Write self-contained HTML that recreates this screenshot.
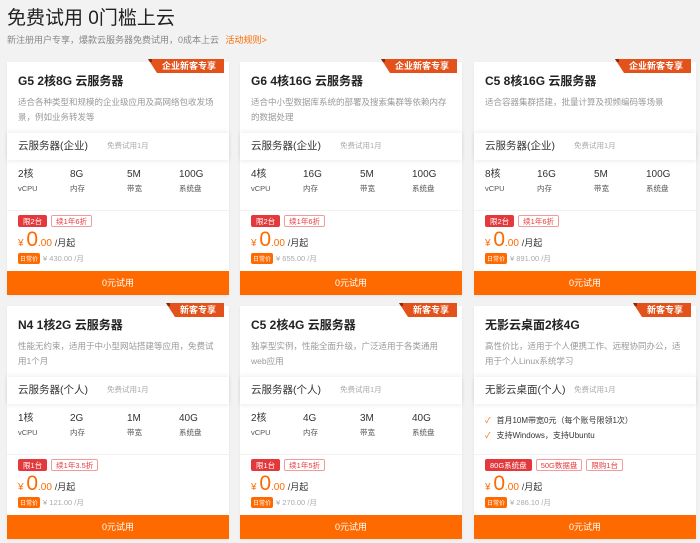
<!DOCTYPE html><html><head><meta charset="utf-8"><style>
*{margin:0;padding:0;box-sizing:border-box}
body{width:700px;height:543px;background:#f2f2f2;font-family:"Liberation Sans","Noto Sans CJK SC",sans-serif;color:#333;position:relative;overflow:hidden}
h1{position:absolute;left:7px;top:3px;font-size:19px;font-weight:normal;color:#222}
.sub{position:absolute;left:7px;top:33px;font-size:9px;color:#888}
.sub span{color:#ff6a00;margin-left:4px}
.card{position:absolute;width:222px;height:233px;background:#fff;box-shadow:0 1px 3px rgba(0,0,0,.06)}
.badge{position:absolute;right:5px;top:-3px;height:14px;background:#e4521c;color:#fff;font-size:9px;font-weight:bold;line-height:14px;padding:0 8px 0 14px;clip-path:polygon(0 0,100% 0,100% 100%,9px 100%)}
.badge:before{content:"";position:absolute;left:0;top:0;width:4px;height:3px;background:#8a2a0c}
.t{position:absolute;left:11px;top:11px;font-size:12px;line-height:16px;font-weight:bold;color:#222}
.d{position:absolute;left:11px;top:33px;width:200px;font-size:8.5px;line-height:15px;color:#999}
.band{position:absolute;left:0;top:71px;width:222px;height:27px;background:#fff;box-shadow:0 -2px 4px rgba(0,0,0,.05),0 2px 4px rgba(0,0,0,.06)}
.band b{position:absolute;left:11px;top:6px;font-size:10.5px;line-height:14px;font-weight:normal;color:#333}
.band i{position:absolute;left:100px;top:8px;font-size:7.5px;line-height:10px;font-style:normal;color:#aaa}
.sp{position:absolute;top:106px;font-size:10px;line-height:13px;color:#333}
.sp small{display:block;font-size:7.5px;line-height:10px;color:#555;margin-top:3px}
.hr{position:absolute;left:0;top:148px;width:222px;border-top:1px solid #f2f2f2}
.tags{position:absolute;left:11px;top:153px;font-size:0}
.tag{display:inline-block;height:12px;line-height:11px;font-size:7.5px;padding:0 4px;border:1px solid #f29b9b;color:#e4393c;border-radius:2px;margin-right:4px}
.tag.r{background:#e4393c;color:#fff;border-color:#e4393c}
.pr{position:absolute;left:11px;top:166px;color:#ff6a00;font-size:10px;line-height:24px}
.pr em{font-style:normal;font-size:21px}
.pr span{color:#333;font-size:9px}
.dp{position:absolute;left:11px;top:191px;font-size:7.5px;color:#aaa}
.dp b{display:inline-block;background:#ff6a00;color:#fff;font-weight:normal;font-size:6px;padding:1px 2px;border-radius:2px;margin-right:3px}
.btn{position:absolute;left:0;bottom:0;width:222px;height:24px;background:#ff6a00;color:#fff;font-size:9px;text-align:center;line-height:24px}
.ck{position:absolute;left:11px;font-size:8px;color:#333}
.ck:before{content:"✓";color:#ff6a00;margin-right:6px}
</style></head><body>
<h1>免费试用 0门槛上云</h1>
<div class="sub">新注册用户专享，爆款云服务器免费试用，0成本上云 <span>活动规则&gt;</span></div>

<div class="card" style="left:7px;top:62px"><div class="badge">企业新客专享</div><div class="t">G5 2核8G 云服务器</div><div class="d">适合各种类型和规模的企业级应用及高网络包收发场景，例如业务转发等</div><div class="band"><b>云服务器(企业)</b><i>免费试用1月</i></div>
<div class="sp" style="left:11px">2核<small>vCPU</small></div><div class="sp" style="left:63px">8G<small>内存</small></div><div class="sp" style="left:120px">5M<small>带宽</small></div><div class="sp" style="left:172px">100G<small>系统盘</small></div><div class="hr"></div>
<div class="tags"><span class="tag r">限2台</span><span class="tag">续1年6折</span></div><div class="pr">¥ <em>0</em>.00 <span>/月起</span></div><div class="dp"><b>日常价</b>¥ 430.00 /月</div><div class="btn">0元试用</div></div>

<div class="card" style="left:240px;top:62px"><div class="badge">企业新客专享</div><div class="t">G6 4核16G 云服务器</div><div class="d">适合中小型数据库系统的部署及搜索集群等依赖内存的数据处理</div><div class="band"><b>云服务器(企业)</b><i>免费试用1月</i></div>
<div class="sp" style="left:11px">4核<small>vCPU</small></div><div class="sp" style="left:63px">16G<small>内存</small></div><div class="sp" style="left:120px">5M<small>带宽</small></div><div class="sp" style="left:172px">100G<small>系统盘</small></div><div class="hr"></div>
<div class="tags"><span class="tag r">限2台</span><span class="tag">续1年6折</span></div><div class="pr">¥ <em>0</em>.00 <span>/月起</span></div><div class="dp"><b>日常价</b>¥ 655.00 /月</div><div class="btn">0元试用</div></div>

<div class="card" style="left:474px;top:62px"><div class="badge">企业新客专享</div><div class="t">C5 8核16G 云服务器</div><div class="d">适合容器集群搭建，批量计算及视频编码等场景</div><div class="band"><b>云服务器(企业)</b><i>免费试用1月</i></div>
<div class="sp" style="left:11px">8核<small>vCPU</small></div><div class="sp" style="left:63px">16G<small>内存</small></div><div class="sp" style="left:120px">5M<small>带宽</small></div><div class="sp" style="left:172px">100G<small>系统盘</small></div><div class="hr"></div>
<div class="tags"><span class="tag r">限2台</span><span class="tag">续1年6折</span></div><div class="pr">¥ <em>0</em>.00 <span>/月起</span></div><div class="dp"><b>日常价</b>¥ 891.00 /月</div><div class="btn">0元试用</div></div>

<div class="card" style="left:7px;top:306px"><div class="badge">新客专享</div><div class="t">N4 1核2G 云服务器</div><div class="d">性能无约束，适用于中小型网站搭建等应用，免费试用1个月</div><div class="band"><b>云服务器(个人)</b><i>免费试用1月</i></div>
<div class="sp" style="left:11px">1核<small>vCPU</small></div><div class="sp" style="left:63px">2G<small>内存</small></div><div class="sp" style="left:120px">1M<small>带宽</small></div><div class="sp" style="left:172px">40G<small>系统盘</small></div><div class="hr"></div>
<div class="tags"><span class="tag r">限1台</span><span class="tag">续1年3.5折</span></div><div class="pr">¥ <em>0</em>.00 <span>/月起</span></div><div class="dp"><b>日常价</b>¥ 121.00 /月</div><div class="btn">0元试用</div></div>

<div class="card" style="left:240px;top:306px"><div class="badge">新客专享</div><div class="t">C5 2核4G 云服务器</div><div class="d">独享型实例，性能全面升级，广泛适用于各类通用web应用</div><div class="band"><b>云服务器(个人)</b><i>免费试用1月</i></div>
<div class="sp" style="left:11px">2核<small>vCPU</small></div><div class="sp" style="left:63px">4G<small>内存</small></div><div class="sp" style="left:120px">3M<small>带宽</small></div><div class="sp" style="left:172px">40G<small>系统盘</small></div><div class="hr"></div>
<div class="tags"><span class="tag r">限1台</span><span class="tag">续1年5折</span></div><div class="pr">¥ <em>0</em>.00 <span>/月起</span></div><div class="dp"><b>日常价</b>¥ 270.00 /月</div><div class="btn">0元试用</div></div>

<div class="card" style="left:474px;top:306px"><div class="badge">新客专享</div><div class="t">无影云桌面2核4G</div><div class="d">高性价比，适用于个人便携工作、远程协同办公，适用于个人Linux系统学习</div><div class="band"><b>无影云桌面(个人)</b><i>免费试用1月</i></div>
<div class="ck" style="top:109px">首月10M带宽0元（每个账号限领1次）</div><div class="ck" style="top:124px">支持Windows，支持Ubuntu</div><div class="hr"></div>
<div class="tags"><span class="tag r">80G系统盘</span><span class="tag">50G数据盘</span><span class="tag">限购1台</span></div><div class="pr">¥ <em>0</em>.00 <span>/月起</span></div><div class="dp"><b>日常价</b>¥ 286.10 /月</div><div class="btn">0元试用</div></div>
</body></html>
